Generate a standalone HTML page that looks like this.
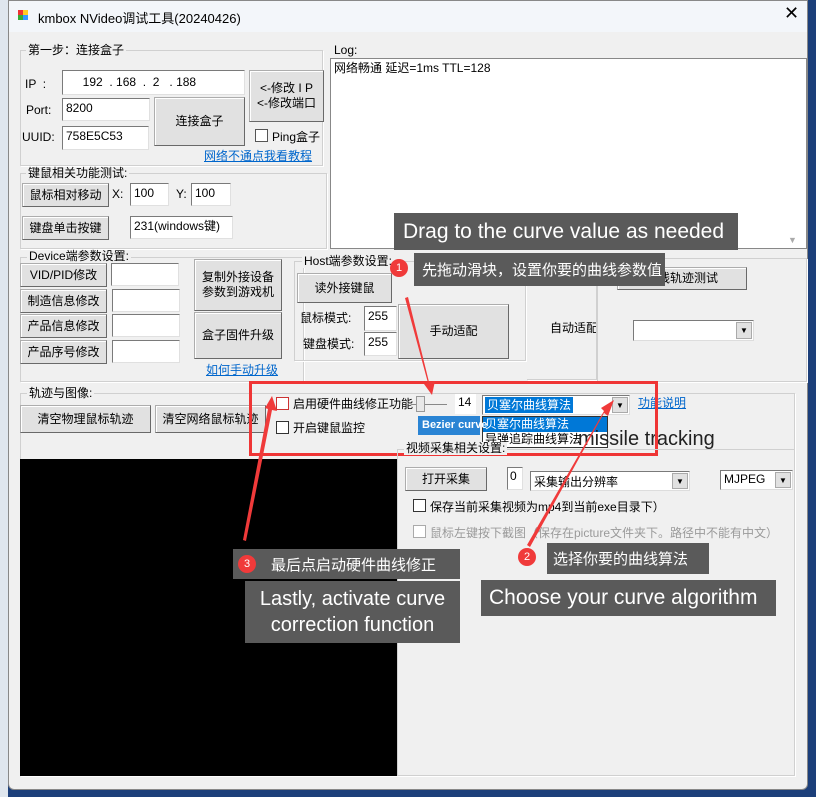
<!DOCTYPE html>
<html><head><meta charset="utf-8"><style>
*{box-sizing:border-box;margin:0;padding:0}
body{width:816px;height:797px;overflow:hidden;background:#1c3f7a;position:relative;font-family:"Liberation Sans","Noto Sans CJK SC",sans-serif;font-size:12px;color:#000}
.a{position:absolute;white-space:nowrap}
.win{position:absolute;left:8px;top:0;width:800px;height:790px;background:#f0f0f0;border:1px solid #888;border-radius:0 0 6px 6px}
.title{position:absolute;left:0;top:0;width:798px;height:31px;background:#f3f6fa}
.btn{position:absolute;background:#e1e1e1;border:1px solid #adadad;border-right-color:#696969;border-bottom-color:#696969;box-shadow:inset 1px 1px #fff;display:flex;align-items:center;justify-content:center;text-align:center;line-height:15px;font-size:12px;white-space:nowrap}
.fld{position:absolute;background:#fff;border:1px solid #7a7a7a;border-right-color:#e0e0e0;border-bottom-color:#e0e0e0;padding:1px 3px;font-size:12px;line-height:17px;white-space:nowrap}
.grp{position:absolute;border:1px solid #d0d0d0;box-shadow:1px 1px #fff}
.gl{position:absolute;background:#f0f0f0;padding:0 2px;font-size:12px;line-height:13px;white-space:nowrap}
.lnk{position:absolute;color:#0066cc;text-decoration:underline;font-size:12px;white-space:nowrap}
.cb{position:absolute;width:13px;height:13px;background:#fff;border:1px solid #333}
.tip{position:absolute;background:#5a5a5a;color:#fff;font-family:"Liberation Sans","Noto Sans CJK SC",sans-serif;display:flex;align-items:center;white-space:nowrap}
.num{position:absolute;width:18px;height:18px;border-radius:9px;background:#f03a3a;color:#fff;font-size:11px;display:flex;align-items:center;justify-content:center}
.cmb{position:absolute;background:#fff;border:1px solid #7a7a7a;border-right-color:#ddd;border-bottom-color:#ddd}
.arr{position:absolute;right:1px;top:1px;bottom:1px;width:16px;background:#e1e1e1;border:1px solid #aaa;font-size:8px;display:flex;align-items:center;justify-content:center}
</style></head><body>
<div class="a" style="left:0;top:0;width:8px;height:797px;background:#dfe6ee"></div>
<div class="win">
<div class="title"></div>
</div>
<div class="a" style="left:18px;top:10px;width:5px;height:5px;background:#e33"></div>
<div class="a" style="left:23px;top:10px;width:5px;height:5px;background:#fc2"></div>
<div class="a" style="left:18px;top:15px;width:5px;height:5px;background:#3a3"></div>
<div class="a" style="left:23px;top:15px;width:5px;height:5px;background:#39f"></div>
<div class="a" style="left:38px;top:8px;font-size:13px">kmbox NVideo调试工具(20240426)</div>
<div class="a" style="left:784px;top:3px;font-size:18px">✕</div>

<div class="grp" style="left:20px;top:50px;width:303px;height:116px"></div>
<div class="gl" style="left:26px;top:44px">第一步：连接盒子</div>
<div class="a" style="left:25px;top:77px">IP &nbsp;:</div>
<div class="fld" style="left:62px;top:70px;width:183px;height:25px;padding-top:3px">&nbsp;&nbsp;&nbsp;&nbsp;&nbsp;192 &nbsp;. 168 &nbsp;. &nbsp;2 &nbsp;&nbsp;. 188</div>
<div class="a" style="left:26px;top:103px">Port:</div>
<div class="fld" style="left:62px;top:98px;width:88px;height:23px">8200</div>
<div class="a" style="left:22px;top:130px">UUID:</div>
<div class="fld" style="left:62px;top:126px;width:87px;height:24px">758E5C53</div>
<div class="btn" style="left:154px;top:97px;width:91px;height:49px">连接盒子</div>
<div class="btn" style="left:249px;top:70px;width:75px;height:52px">&lt;-修改 I P<br>&lt;-修改端口</div>
<div class="cb" style="left:255px;top:129px;border-color:#555"></div>
<div class="a" style="left:272px;top:128px">Ping盒子</div>
<div class="lnk" style="left:204px;top:147px">网络不通点我看教程</div>

<div class="a" style="left:334px;top:43px">Log:</div>
<div class="fld" style="left:330px;top:58px;width:477px;height:191px;border-color:#888">网络畅通 延迟=1ms TTL=128</div>
<div class="a" style="left:788px;top:235px;color:#aaa;font-size:9px">▼</div>

<div class="grp" style="left:20px;top:173px;width:307px;height:76px"></div>
<div class="gl" style="left:26px;top:167px">键鼠相关功能测试:</div>
<div class="btn" style="left:22px;top:183px;width:87px;height:24px">鼠标相对移动</div>
<div class="a" style="left:112px;top:187px">X:</div>
<div class="fld" style="left:130px;top:183px;width:39px;height:23px">100</div>
<div class="a" style="left:176px;top:187px">Y:</div>
<div class="fld" style="left:191px;top:183px;width:40px;height:23px">100</div>
<div class="btn" style="left:22px;top:216px;width:87px;height:24px">键盘单击按键</div>
<div class="fld" style="left:130px;top:216px;width:103px;height:23px">231(windows键)</div>

<div class="grp" style="left:20px;top:257px;width:284px;height:125px"></div>
<div class="gl" style="left:27px;top:250px">Device端参数设置:</div>
<div class="btn" style="left:20px;top:263px;width:87px;height:24px">VID/PID修改</div>
<div class="btn" style="left:20px;top:289px;width:87px;height:24px">制造信息修改</div>
<div class="btn" style="left:20px;top:314px;width:87px;height:24px">产品信息修改</div>
<div class="btn" style="left:20px;top:340px;width:87px;height:24px">产品序号修改</div>
<div class="fld" style="left:111px;top:263px;width:68px;height:23px"></div>
<div class="fld" style="left:112px;top:289px;width:68px;height:23px"></div>
<div class="fld" style="left:112px;top:314px;width:68px;height:23px"></div>
<div class="fld" style="left:112px;top:340px;width:68px;height:23px"></div>
<div class="btn" style="left:194px;top:259px;width:88px;height:52px">复制外接设备<br>参数到游戏机</div>
<div class="btn" style="left:194px;top:312px;width:88px;height:47px">盒子固件升级</div>
<div class="lnk" style="left:206px;top:361px">如何手动升级</div>

<div class="grp" style="left:294px;top:261px;width:232px;height:100px"></div>
<div class="gl" style="left:302px;top:255px">Host端参数设置:</div>
<div class="btn" style="left:297px;top:273px;width:95px;height:30px">读外接键鼠</div>
<div class="a" style="left:300px;top:309px">鼠标模式:</div>
<div class="fld" style="left:364px;top:306px;width:33px;height:25px">255</div>
<div class="a" style="left:303px;top:335px">键盘模式:</div>
<div class="fld" style="left:364px;top:332px;width:33px;height:24px">255</div>
<div class="btn" style="left:398px;top:304px;width:111px;height:55px">手动适配</div>
<div class="a" style="left:550px;top:319px">自动适配</div>
<div class="grp" style="left:527px;top:258px;width:70px;height:122px;border-left:none"></div>
<div class="grp" style="left:597px;top:258px;width:210px;height:124px"></div>
<div class="btn" style="left:617px;top:267px;width:130px;height:23px">曲线轨迹测试</div>
<div class="cmb" style="left:633px;top:320px;width:121px;height:21px"><div class="arr">▼</div></div>

<div class="grp" style="left:20px;top:393px;width:775px;height:383px"></div>
<div class="gl" style="left:27px;top:387px">轨迹与图像:</div>
<div class="btn" style="left:20px;top:405px;width:131px;height:28px">清空物理鼠标轨迹</div>
<div class="btn" style="left:155px;top:405px;width:111px;height:28px">清空网络鼠标轨迹</div>
<div class="cb" style="left:276px;top:397px;border-color:#c33"></div>
<div class="a" style="left:293px;top:395px">启用硬件曲线修正功能</div>
<div class="cb" style="left:276px;top:421px"></div>
<div class="a" style="left:293px;top:419px">开启键鼠监控</div>
<div class="a" style="left:412px;top:404px;width:35px;height:1px;background:#888"></div>
<div class="a" style="left:416px;top:396px;width:9px;height:16px;background:#e8e8e8;border:1px solid #999"></div>
<div class="fld" style="left:455px;top:394px;width:21px;height:20px;border:none;padding:0 3px">14</div>
<div class="cmb" style="left:482px;top:395px;width:148px;height:20px"><span class="a" style="left:2px;top:1px;background:#0078d7;color:#fff;padding:0 2px;line-height:16px">贝塞尔曲线算法</span><div class="arr">▼</div></div>
<div class="lnk" style="left:638px;top:394px">功能说明</div>
<div class="a" style="left:482px;top:416px;width:126px;height:32px;background:#fff;border:1px solid #333"></div>
<div class="a" style="left:483px;top:417px;width:124px;height:15px;background:#0078d7;color:#fff;padding-left:2px;line-height:15px">贝塞尔曲线算法</div>
<div class="a" style="left:485px;top:432px;line-height:15px">导弹追踪曲线算法</div>
<div class="a" style="left:418px;top:416px;width:62px;height:19px;background:#2a84d4;color:#fff;font-size:11px;font-weight:bold;line-height:19px;padding-left:4px">Bezier curve</div>
<div class="a" style="left:578px;top:428px;font-size:20px;color:#222">missile tracking</div>
<div class="a" style="left:249px;top:381px;width:409px;height:75px;border:3px solid #ef3535"></div>

<div class="a" style="left:20px;top:459px;width:377px;height:317px;background:#000"></div>
<div class="grp" style="left:397px;top:449px;width:398px;height:327px"></div>
<div class="gl" style="left:404px;top:442px">视频采集相关设置:</div>
<div class="btn" style="left:405px;top:467px;width:82px;height:24px">打开采集</div>
<div class="fld" style="left:507px;top:467px;width:16px;height:23px;padding:0 2px">0</div>
<div class="cmb" style="left:530px;top:471px;width:160px;height:20px"><span class="a" style="left:3px;top:1px">采集输出分辨率</span><div class="arr">▼</div></div>
<div class="cmb" style="left:720px;top:470px;width:73px;height:20px"><span class="a" style="left:3px;top:1px">MJPEG</span><div class="arr">▼</div></div>
<div class="cb" style="left:413px;top:499px"></div>
<div class="a" style="left:430px;top:498px">保存当前采集视频为mp4到当前exe目录下）</div>
<div class="cb" style="left:413px;top:525px;border-color:#aaa"></div>
<div class="a" style="left:430px;top:524px;color:#9a9a9a">鼠标左键按下截图（保存在picture文件夹下。路径中不能有中文）</div>

<div class="tip" style="left:394px;top:213px;width:344px;height:37px;font-size:21px;padding-left:9px">Drag to the curve value as needed</div>
<div class="tip" style="left:414px;top:253px;width:251px;height:33px;font-size:15px;padding-left:8px">先拖动滑块，设置你要的曲线参数值</div>
<div class="num" style="left:390px;top:259px">1</div>
<div class="tip" style="left:547px;top:543px;width:162px;height:31px;font-size:15px;padding-left:6px">选择你要的曲线算法</div>
<div class="num" style="left:518px;top:548px">2</div>
<div class="tip" style="left:481px;top:580px;width:295px;height:36px;font-size:21px;padding-left:8px">Choose your curve algorithm</div>
<div class="tip" style="left:233px;top:549px;width:227px;height:30px;font-size:15px;padding-left:38px">最后点启动硬件曲线修正</div>
<div class="num" style="left:238px;top:555px">3</div>
<div class="tip" style="left:245px;top:581px;width:215px;height:62px;font-size:20px;justify-content:center;text-align:center;line-height:26px;white-space:normal">Lastly, activate curve correction function</div>

<svg class="a" style="left:0;top:0" width="816" height="797">
<g fill="#f03a3a">
<polygon points="405,298 408,297 429,382 435,381 432,395 424,384 428,383"/>
<polygon points="243,540 246,541 272,410 277,411 272,396 265,408 268,409"/>
<polygon points="527,545 530,547 604,413 608,416 614,400 601,408 604,411"/>
</g>
</svg>
</body></html>
